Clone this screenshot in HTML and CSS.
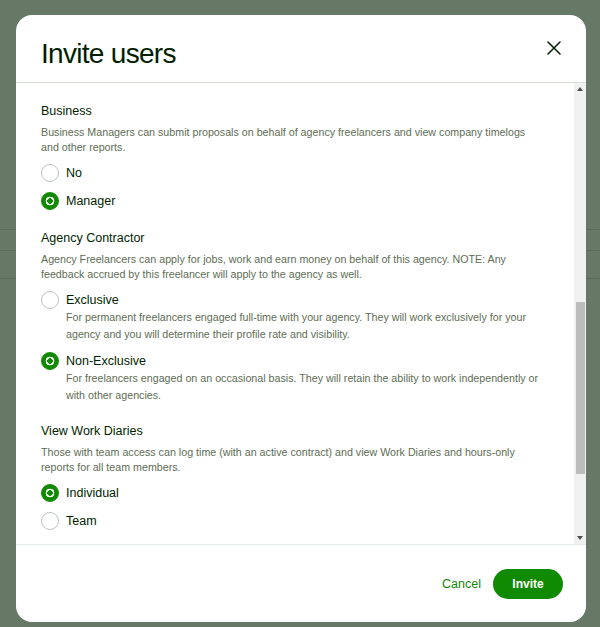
FILE: index.html
```html
<!DOCTYPE html>
<html lang="en">

<head>
    <meta charset="UTF-8">
    <meta name="viewport" content="width=device-width, initial-scale=1.0">
    <title>Invite users</title>
    <link rel="stylesheet" href="styles.css">
</head>

<body>
    <div class="backdrop">
        <div class="modal" role="dialog" aria-labelledby="modalTitle">
            <div class="modal-header">
                <h1 id="modalTitle">Invite users</h1>
                <button type="button" class="close-button" aria-label="Close">
                    <svg width="14" height="14" viewBox="0 0 14 14" fill="none" stroke="#001e00" stroke-width="1.5" stroke-linecap="round">
                        <path d="M1 1L13 13M13 1L1 13" />
                    </svg>
                </button>
            </div>

            <div class="modal-body">
                <div class="modal-scroll">
                    <!-- Business -->
                    <div class="perm-section">
                        <h3>Business</h3>
                        <p class="perm-desc">Business Managers can submit proposals on behalf of agency freelancers and view company timelogs and other reports.</p>
                        <div class="radio-list">
                            <label class="radio-row"><input type="radio" name="business"><span>No</span></label>
                            <label class="radio-row"><input type="radio" name="business" checked><span>Manager</span></label>
                        </div>
                    </div>

                    <!-- Agency Contractor -->
                    <div class="perm-section">
                        <h3>Agency Contractor</h3>
                        <p class="perm-desc">Agency Freelancers can apply for jobs, work and earn money on behalf of this agency. NOTE: Any feedback accrued by this freelancer will apply to the agency as well.</p>
                        <div class="radio-list">
                            <label class="radio-row">
                                <input type="radio" name="contractor">
                                <span class="option-text">
                                    <span>Exclusive</span>
                                    <span class="option-desc">For permanent freelancers engaged full-time with your agency. They will work exclusively for your agency and you will determine their profile rate and visibility.</span>
                                </span>
                            </label>
                            <label class="radio-row">
                                <input type="radio" name="contractor" checked>
                                <span class="option-text">
                                    <span>Non-Exclusive</span>
                                    <span class="option-desc">For freelancers engaged on an occasional basis. They will retain the ability to work independently or with other agencies.</span>
                                </span>
                            </label>
                        </div>
                    </div>

                    <!-- Work diaries -->
                    <div class="perm-section">
                        <h3>View Work Diaries</h3>
                        <p class="perm-desc">Those with team access can log time (with an active contract) and view Work Diaries and hours-only reports for all team members.</p>
                        <div class="radio-list">
                            <label class="radio-row"><input type="radio" name="diaries" checked><span>Individual</span></label>
                            <label class="radio-row"><input type="radio" name="diaries"><span>Team</span></label>
                        </div>
                    </div>
                </div>

                <!-- scrollbar of the dialog body -->
                <div class="scrollbar" aria-hidden="true">
                    <div class="scroll-arrow">
                        <svg width="6" height="4" viewBox="0 0 6 4"><path d="M0 4L3 0L6 4Z" fill="#505050" /></svg>
                    </div>
                    <div class="scroll-track">
                        <div class="scroll-thumb"></div>
                    </div>
                    <div class="scroll-arrow">
                        <svg width="6" height="4" viewBox="0 0 6 4"><path d="M0 0L3 4L6 0Z" fill="#505050" /></svg>
                    </div>
                </div>
            </div>

            <div class="modal-footer">
                <button type="button" class="cancel-button">Cancel</button>
                <button type="button" class="invite-button">Invite</button>
            </div>
        </div>
    </div>
</body>

</html>
```

FILE: styles.css
```css
:root {
    --green: #108a00;
    --text-primary: #001e00;
    --text-secondary: #5e6d55;
    --divider: #d5e0d5;
    --radio-border: #bac5ba;
    --backdrop: #667866;
}

* {
    box-sizing: border-box;
}

body {
    margin: 0;
    font-family: "Liberation Sans", Arial, sans-serif;
    color: var(--text-primary);
}

.backdrop {
    width: 600px;
    height: 627px;
    padding: 15px 14px 5px 16px;
    background-color: var(--backdrop);
    background-image:
        linear-gradient(#5a6d5a, #5a6d5a),
        linear-gradient(#5a6d5a, #5a6d5a),
        linear-gradient(#5a6d5a, #5a6d5a);
    background-size: 100% 1px;
    background-repeat: no-repeat;
    background-position: 0 229px, 0 250px, 0 278px;
}

.modal {
    height: 607px;
    background: #fff;
    border-radius: 16px;
    display: flex;
    flex-direction: column;
    overflow: hidden;
}

.modal-header {
    display: flex;
    justify-content: space-between;
    align-items: flex-start;
    padding: 22px 25px 11px;
    border-bottom: 1px solid var(--divider);
}

.modal-header h1 {
    margin: 0;
    font-size: 28px;
    line-height: 34px;
    font-weight: 400;
    letter-spacing: -0.7px;
    color: var(--text-primary);
}

.close-button {
    background: none;
    border: none;
    padding: 0;
    width: 14px;
    height: 14px;
    margin-top: 4px;
    cursor: pointer;
    display: flex;
}

.modal-body {
    flex: 1;
    display: flex;
    min-height: 0;
}

.modal-scroll {
    flex: 1;
    overflow: hidden;
    padding: 19px 31px 0 25px;
}

.scrollbar {
    width: 12px;
    background: #f1f1f1;
    display: grid;
    grid-template-rows: 12px 1fr 12px;
}

.scroll-arrow {
    display: flex;
    align-items: center;
    justify-content: center;
}

.scroll-track {
    display: grid;
    grid-template-rows: 207fr 171fr 58fr;
}

.scroll-thumb {
    grid-row: 2;
    margin: 0 1px 0 1.5px;
    background: #bcbcbc;
}

.perm-section {
    margin-bottom: 19px;
}

.perm-section h3 {
    margin: 0 0 5px;
    font-size: 12.5px;
    line-height: 18px;
    font-weight: 400;
    color: var(--text-primary);
}

.perm-desc {
    margin: 0 0 9px;
    font-size: 10.7px;
    line-height: 15px;
    color: var(--text-secondary);
}

.radio-list {
    display: flex;
    flex-direction: column;
    gap: 10px;
}

.radio-row {
    display: flex;
    align-items: flex-start;
    gap: 7px;
    font-size: 12.5px;
    line-height: 18px;
    color: var(--text-primary);
    cursor: pointer;
}

.radio-row input[type="radio"] {
    appearance: none;
    -webkit-appearance: none;
    flex: none;
    width: 18px;
    height: 18px;
    margin: 0;
    border: 1.5px solid var(--radio-border);
    border-radius: 50%;
    background: #fff;
}

.radio-row input[type="radio"]:checked {
    border-color: var(--green);
    background: radial-gradient(circle, var(--green) 0 2.6px, #fff 3px 4.2px, var(--green) 4.6px);
}

.option-text {
    display: flex;
    flex-direction: column;
}

.option-desc {
    font-size: 10.7px;
    line-height: 16.5px;
    color: var(--text-secondary);
}

.modal-footer {
    display: flex;
    justify-content: flex-end;
    align-items: center;
    padding: 24px 23px 23px;
    border-top: 1px solid #e4ebe4;
}

.cancel-button {
    background: none;
    border: none;
    padding: 0 12px;
    height: 30px;
    font-family: inherit;
    font-size: 12.5px;
    color: var(--green);
    cursor: pointer;
}

.invite-button {
    background-color: var(--green);
    color: #fff;
    border: none;
    border-radius: 15px;
    width: 70px;
    height: 30px;
    padding: 0;
    font-family: inherit;
    font-size: 12px;
    font-weight: 700;
    cursor: pointer;
}
```
